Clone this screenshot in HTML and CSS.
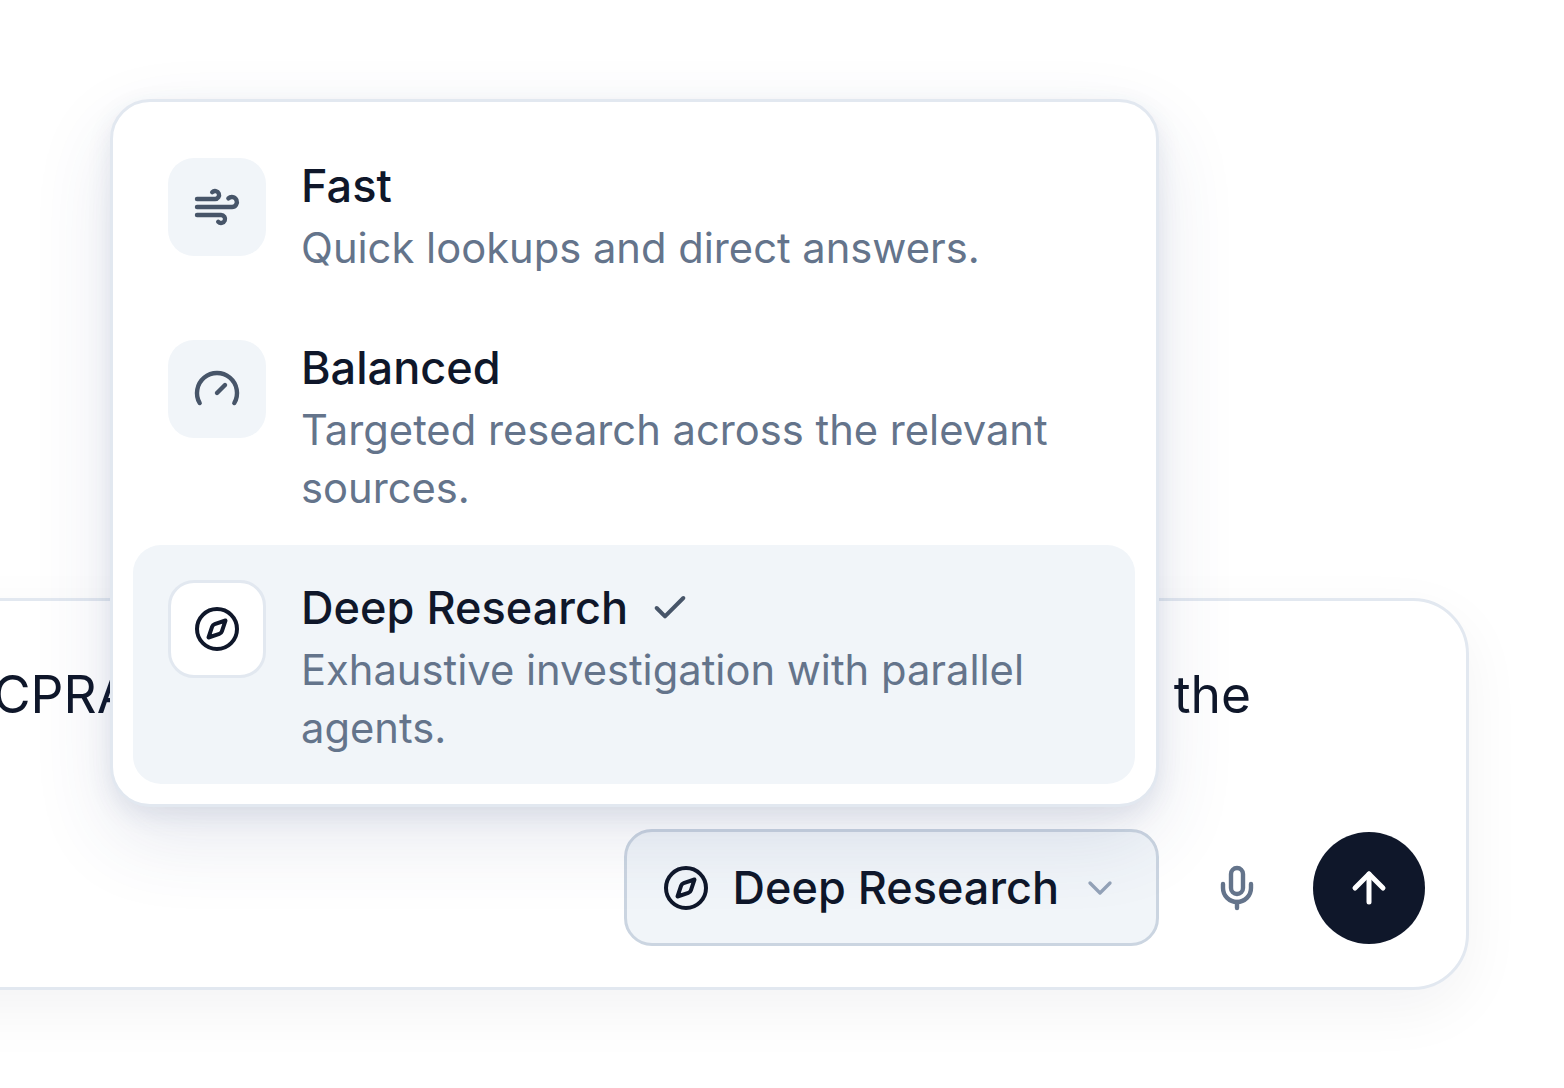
FILE: index.html
```html
<!DOCTYPE html>
<html lang="en">
<head>
<meta charset="utf-8">
<title>Research mode</title>
<link rel="stylesheet" href="styles.css">
</head>
<body>
<main class="page">
  <section class="composer">
    <div class="prompt"><span>CPRA</span><span>the</span></div>
    <div class="toolbar">
      <button class="mode-pill" type="button">
        <svg class="icon ink" viewBox="0 0 24 24"><circle cx="12" cy="12" r="10"/><path d="m16.24 7.76-1.804 5.411a2 2 0 0 1-1.265 1.265L7.76 16.24l1.804-5.411a2 2 0 0 1 1.265-1.265z"/></svg>
        <span class="pill-label">Deep Research</span>
        <svg class="icon-sm chevron" viewBox="0 0 24 24"><path d="m6 9 6 6 6-6"/></svg>
      </button>
      <button class="mic" type="button" aria-label="Voice">
        <svg class="icon muted" viewBox="0 0 24 24"><path d="M12 2a3 3 0 0 0-3 3v7a3 3 0 0 0 6 0V5a3 3 0 0 0-3-3Z"/><path d="M19 10v2a7 7 0 0 1-14 0v-2"/><path d="M12 19v3"/></svg>
      </button>
      <button class="send" type="button" aria-label="Send">
        <svg class="icon white" viewBox="0 0 24 24"><path d="m5 12 7-7 7 7"/><path d="M12 19V5"/></svg>
      </button>
    </div>

    <div class="menu">
      <div class="item">
        <div class="item-icon"><svg class="icon slate" viewBox="0 0 24 24"><path d="M17.7 7.7a2.5 2.5 0 1 1 1.8 4.3H2"/><path d="M9.6 4.6A2 2 0 1 1 11 8H2"/><path d="M12.6 19.4A2 2 0 1 0 14 16H2"/></svg></div>
        <div class="item-text">
          <div class="item-title">Fast</div>
          <div class="item-desc">Quick lookups and direct answers.</div>
        </div>
      </div>
      <div class="item">
        <div class="item-icon"><svg class="icon slate" viewBox="0 0 24 24"><path d="m12 14 4-4"/><path d="M3.34 19a10 10 0 1 1 17.32 0"/></svg></div>
        <div class="item-text">
          <div class="item-title">Balanced</div>
          <div class="item-desc">Targeted research across the relevant sources.</div>
        </div>
      </div>
      <div class="item selected">
        <div class="item-icon"><svg class="icon ink" viewBox="0 0 24 24"><circle cx="12" cy="12" r="10"/><path d="m16.24 7.76-1.804 5.411a2 2 0 0 1-1.265 1.265L7.76 16.24l1.804-5.411a2 2 0 0 1 1.265-1.265z"/></svg></div>
        <div class="item-text">
          <div class="item-title">Deep Research <svg class="icon-sm check" viewBox="0 0 24 24"><path d="M20 6 9 17l-5-5"/></svg></div>
          <div class="item-desc">Exhaustive investigation with parallel agents.</div>
        </div>
      </div>
    </div>
  </section>
</main>
</body>
</html>
```

FILE: styles.css
```css
* { box-sizing: border-box; }

html, body {
  margin: 0;
  height: 100%;
  background: #fff;
  overflow: hidden;
}

body {
  font-family: Inter, "Liberation Sans", sans-serif;
  color: #0f172a;
}

.page {
  padding: 598px 95px 0 0;
  margin-left: -100px;
}

.composer {
  position: relative;
  display: flex;
  flex-direction: column;
  height: 392px;
  padding: 57px 41px 41px 90px;
  background: #fff;
  border: 3px solid #e2e8f0;
  border-radius: 56px;
  box-shadow: 0 20px 60px rgba(15, 23, 42, 0.05);
}

.prompt {
  display: flex;
  justify-content: space-between;
  padding-right: 174px;
  font-size: 51.5px;
  line-height: 72px;
  white-space: nowrap;
}

.toolbar {
  display: flex;
  align-items: center;
  justify-content: flex-end;
  gap: 20px;
  margin-top: auto;
}

button {
  font: inherit;
  color: inherit;
  background: none;
  border: 0;
  padding: 0;
}

.mode-pill {
  display: flex;
  align-items: center;
  height: 117px;
  margin-right: 2px;
  padding: 0 36px 0 35px;
  background: #f1f5f9;
  border: 3px solid #cbd5e1;
  border-radius: 28px;
}

.pill-label {
  margin: 0 21px 0 23px;
  font-size: 45px;
  font-weight: 500;
  white-space: nowrap;
}

.mic {
  display: flex;
  align-items: center;
  justify-content: center;
  width: 112px;
  height: 112px;
}

.send {
  display: flex;
  align-items: center;
  justify-content: center;
  width: 112px;
  height: 112px;
  background: #0f172a;
  border-radius: 50%;
}

.icon, .icon-sm {
  flex: none;
  fill: none;
  stroke: currentColor;
  stroke-width: 2;
  stroke-linecap: round;
  stroke-linejoin: round;
}

.icon { width: 48px; height: 48px; }
.icon-sm { width: 40px; height: 40px; }

.ink { color: #0f172a; }
.slate { color: #475569; stroke-width: 2.2; }
.muted { color: #64748b; stroke-width: 2.2; }
.white { color: #fff; stroke-width: 2.5; }
.chevron { color: #94a3b8; }
.check { color: #475569; margin-left: 10px; vertical-align: -4px; stroke-width: 2.4; }

.menu {
  position: absolute;
  left: 207px;
  top: -502px;
  width: 1049px;
  display: flex;
  flex-direction: column;
  gap: 1px;
  padding: 21px 21px 20px 20px;
  background: #fff;
  border: 3px solid #e2e8f0;
  border-radius: 40px;
  box-shadow: 0 8px 24px rgba(51, 65, 120, 0.1), 0 32px 80px rgba(51, 65, 120, 0.12);
}

.item {
  display: flex;
  gap: 35px;
  padding: 27px 35px;
  border-radius: 28px;
}

.item.selected { background: #f1f5f9; }

.item-icon {
  flex: none;
  display: flex;
  align-items: center;
  justify-content: center;
  width: 98px;
  height: 98px;
  margin-top: 8px;
  background: #f1f5f9;
  border-radius: 26px;
}

.selected .item-icon {
  background: #fff;
  border: 3px solid #e2e8f0;
}

.item-title {
  padding-top: 2px;
  font-size: 45.1px;
  font-weight: 500;
  line-height: 67px;
}

.item-desc {
  font-size: 41.7px;
  line-height: 58px;
  color: #64748b;
}
```
